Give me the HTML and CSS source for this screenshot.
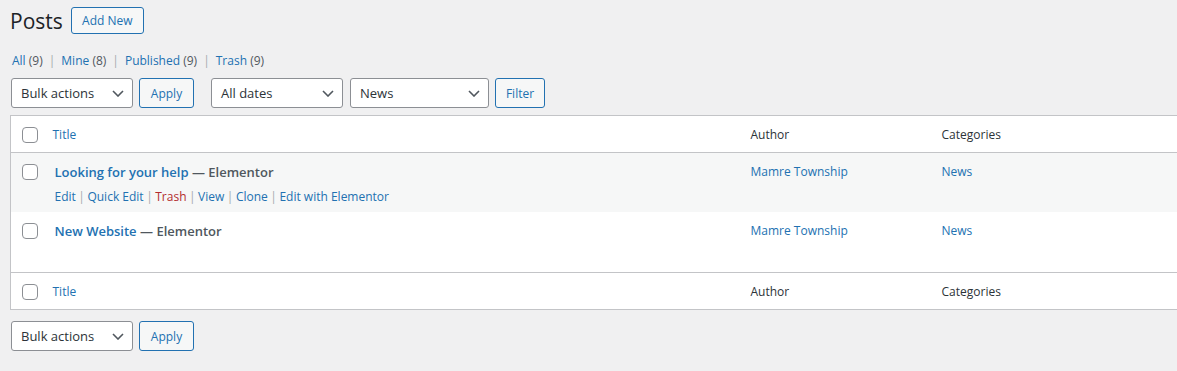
FILE: index.html
```html
<!DOCTYPE html>
<html lang="en">
<head>
    <meta charset="UTF-8">
    <meta name="viewport" content="width=device-width, initial-scale=1.0">
    <title>Posts</title>
    <link rel="stylesheet" href="styles.css">
</head>
<body>
    <div class="wrap">
        <div class="page-head">
            <h1>Posts</h1>
            <a class="button add-new" href="#">Add New</a>
        </div>

        <ul class="views">
            <li><a href="#">All</a> <span class="count">(9)</span><span class="sep">|</span></li>
            <li><a href="#">Mine</a> <span class="count">(8)</span><span class="sep">|</span></li>
            <li><a href="#">Published</a> <span class="count">(9)</span><span class="sep">|</span></li>
            <li><a href="#">Trash</a> <span class="count">(9)</span></li>
        </ul>

        <!-- Top toolbar -->
        <div class="tablenav top">
            <div class="select bulk">
                <span>Bulk actions</span>
                <svg viewBox="0 0 12 7" width="12" height="7"><path d="M1 1l5 5 5-5" fill="none" stroke="#50575e" stroke-width="1.6"/></svg>
            </div>
            <a class="button apply" href="#">Apply</a>
            <div class="select dates">
                <span>All dates</span>
                <svg viewBox="0 0 12 7" width="12" height="7"><path d="M1 1l5 5 5-5" fill="none" stroke="#50575e" stroke-width="1.6"/></svg>
            </div>
            <div class="select cats">
                <span>News</span>
                <svg viewBox="0 0 12 7" width="12" height="7"><path d="M1 1l5 5 5-5" fill="none" stroke="#50575e" stroke-width="1.6"/></svg>
            </div>
            <a class="button filter" href="#">Filter</a>
        </div>

        <table class="posts">
            <colgroup>
                <col class="col-cb">
                <col class="col-title">
                <col class="col-author">
                <col class="col-cats">
                <col>
            </colgroup>
            <thead>
                <tr>
                    <th class="cb"><span class="checkbox"></span></th>
                    <th><a href="#">Title</a></th>
                    <th>Author</th>
                    <th>Categories</th>
                    <th></th>
                </tr>
            </thead>
            <tbody>
                <tr class="alt">
                    <td class="cb"><span class="checkbox"></span></td>
                    <td class="title">
                        <strong><a href="#">Looking for your help</a> <span class="state">— Elementor</span></strong>
                        <div class="row-actions">
                            <a href="#">Edit</a><span class="sep">|</span><a href="#">Quick Edit</a><span class="sep">|</span><a class="trash" href="#">Trash</a><span class="sep">|</span><a href="#">View</a><span class="sep">|</span><a href="#">Clone</a><span class="sep">|</span><a href="#">Edit with Elementor</a>
                        </div>
                    </td>
                    <td><a href="#">Mamre Township</a></td>
                    <td><a href="#">News</a></td>
                    <td></td>
                </tr>
                <tr>
                    <td class="cb"><span class="checkbox"></span></td>
                    <td class="title">
                        <strong><a href="#">New Website</a> <span class="state">— Elementor</span></strong>
                        <div class="row-actions hidden">&nbsp;</div>
                    </td>
                    <td><a href="#">Mamre Township</a></td>
                    <td><a href="#">News</a></td>
                    <td></td>
                </tr>
            </tbody>
            <tfoot>
                <tr>
                    <th class="cb"><span class="checkbox"></span></th>
                    <th><a href="#">Title</a></th>
                    <th>Author</th>
                    <th>Categories</th>
                    <th></th>
                </tr>
            </tfoot>
        </table>

        <!-- Bottom toolbar -->
        <div class="tablenav bottom">
            <div class="select bulk">
                <span>Bulk actions</span>
                <svg viewBox="0 0 12 7" width="12" height="7"><path d="M1 1l5 5 5-5" fill="none" stroke="#50575e" stroke-width="1.6"/></svg>
            </div>
            <a class="button apply" href="#">Apply</a>
        </div>
    </div>
</body>
</html>
```

FILE: styles.css
```css
body {
    margin: 0;
    padding: 0;
    background: #f0f0f1;
    color: #3c434a;
    font-family: "Open Sans", "Noto Sans", sans-serif;
    font-size: 12px;
    overflow: hidden;
}

a {
    color: #2271b1;
    text-decoration: none;
}

.wrap {
    padding: 0 0 0 10px;
    width: 1600px;
}

/* Heading */
.page-head {
    display: flex;
    align-items: center;
    gap: 8px;
    padding-top: 7px;
}

.page-head h1 {
    margin: 0;
    font-size: 21px;
    font-weight: 400;
    line-height: 26px;
    color: #1d2327;
}

.button {
    display: inline-flex;
    align-items: center;
    justify-content: center;
    box-sizing: border-box;
    height: 30px;
    border: 1px solid #2271b1;
    border-radius: 3px;
    background: #f6f7f7;
    color: #2271b1;
    font-size: 12px;
}

.add-new {
    width: 73px;
    height: 27px;
}

/* Views */
.views {
    list-style: none;
    margin: 17px 0 0 2px;
    padding: 0;
    display: flex;
    line-height: 20px;
    font-size: 12px;
}

.views .count {
    color: #50575e;
}

.views .sep {
    color: #a7aaad;
    margin: 0 6px;
}

/* Toolbars */
.tablenav {
    display: flex;
    align-items: center;
    margin-left: 1px;
}

.tablenav.top {
    margin-top: 7px;
    margin-bottom: 7px;
}

.tablenav.bottom {
    margin-top: 11px;
}

.select {
    display: flex;
    align-items: center;
    justify-content: space-between;
    box-sizing: border-box;
    height: 30px;
    padding: 0 8px 0 9px;
    border: 1px solid #8c8f94;
    border-radius: 3px;
    background: #fff;
    color: #2c3338;
    font-size: 13px;
}

.select svg {
    margin-top: 1px;
}

.select.bulk {
    width: 122px;
}

.select.dates {
    width: 132px;
    margin-left: 17px;
}

.select.cats {
    width: 139px;
    margin-left: 7px;
}

.apply {
    width: 55px;
    margin-left: 6px;
}

.filter {
    width: 50px;
    margin-left: 6px;
}

/* Table */
.posts {
    width: 1500px;
    table-layout: fixed;
    border-collapse: collapse;
    border: 1px solid #c3c4c7;
    background: #fff;
}

.col-cb {
    width: 32px;
}

.col-title {
    width: 698px;
}

.col-author {
    width: 191px;
}

.col-cats {
    width: 268px;
}

.posts th {
    text-align: left;
    font-weight: 400;
    color: #2c3338;
    padding: 9px 10px 7px;
    line-height: 20px;
    height: 20px;
}

.posts thead th {
    border-bottom: 1px solid #c3c4c7;
}

.posts tfoot th {
    border-top: 1px solid #c3c4c7;
}

.posts td {
    vertical-align: top;
    padding: 9px 10px 6px;
    line-height: 20px;
}

.posts tr.alt td {
    background: #f6f7f7;
}

.posts tr.alt .title {
    padding-bottom: 5px;
}

.posts .cb {
    padding: 11px 0 0 11px;
    vertical-align: top;
}

.checkbox {
    display: block;
    box-sizing: border-box;
    width: 16px;
    height: 16px;
    border: 1px solid #8c8f94;
    border-radius: 4px;
    background: #fff;
}

.posts td.title {
    padding-left: 12px;
}

.title strong {
    font-size: 13px;
    font-weight: 600;
}

.title .state {
    color: #50575e;
}

.row-actions {
    margin-top: 4px;
    font-size: 12px;
}

.row-actions .sep {
    color: #a7aaad;
    margin: 0 2.5px;
}

.row-actions .trash {
    color: #b32d2e;
}

.row-actions.hidden {
    visibility: hidden;
}
```
